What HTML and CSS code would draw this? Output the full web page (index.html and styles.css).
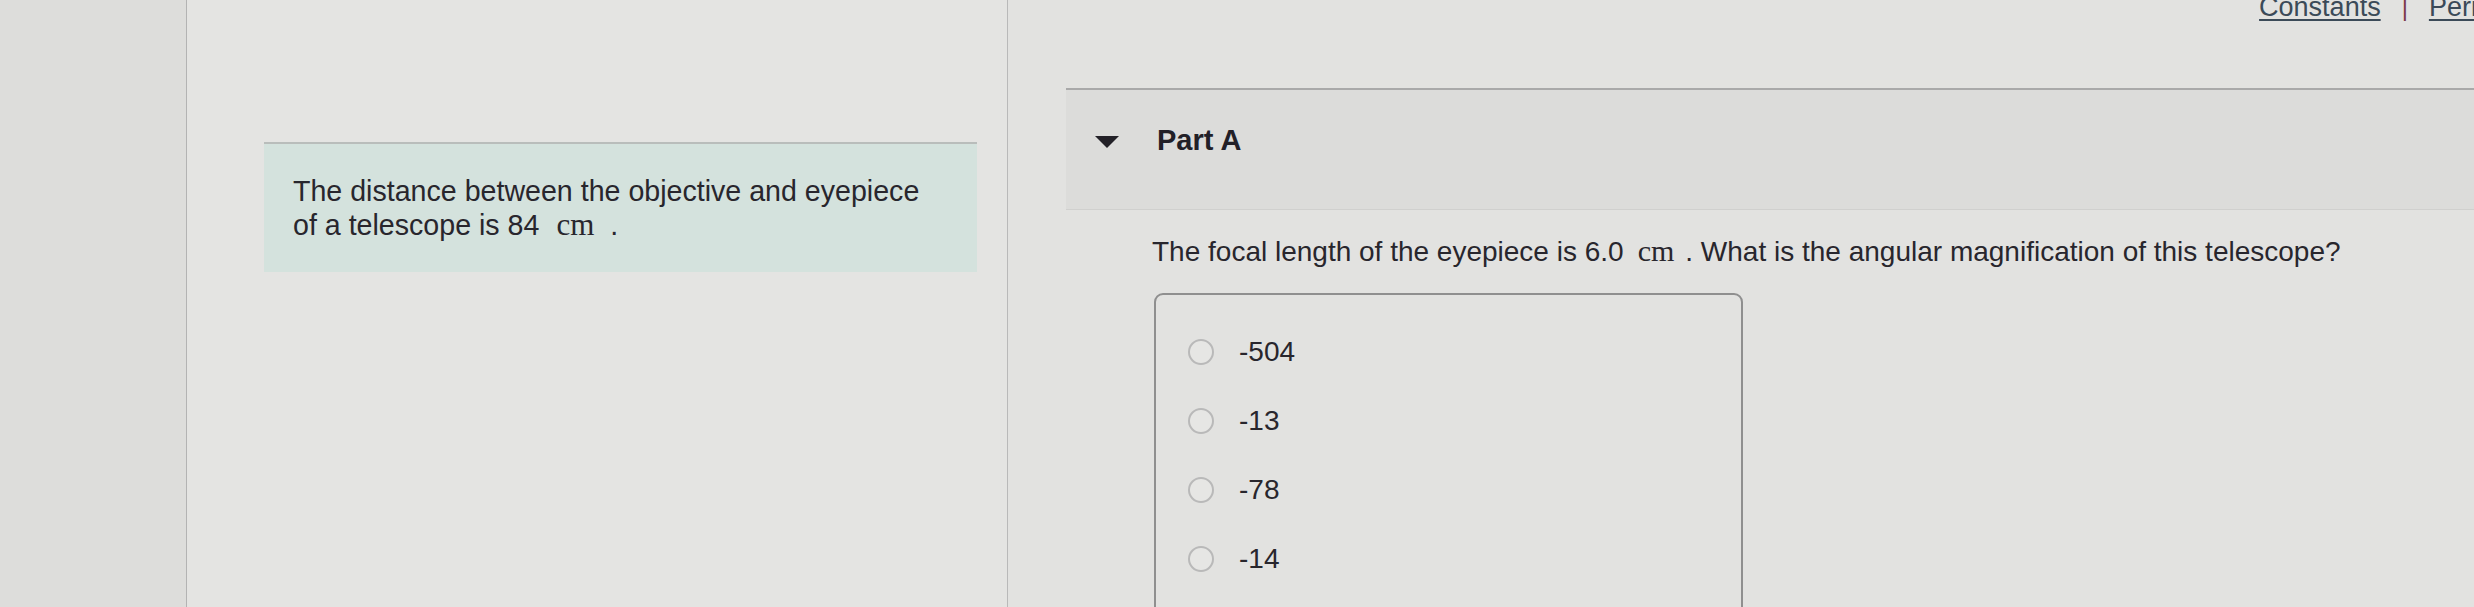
FILE: index.html
```html
<!DOCTYPE html>
<html lang="en">
<head>
<meta charset="utf-8">
<title>Telescope question</title>
<link rel="stylesheet" href="styles.css">
</head>
<body>
<div class="page">
  <aside class="strip"></aside>
  <section class="intro-col">
    <div class="intro">
      The distance between the objective and eyepiece of a telescope is 84<span class="math">cm</span>.
    </div>
  </section>
  <section class="main-col">
    <nav class="links">
      <a href="#" class="link">Constants</a>
      <span class="sep">|</span>
      <a href="#" class="link">Periodic Table</a>
    </nav>
    <div class="part-head">
      <span class="caret"></span>
      <span class="part-title">Part A</span>
    </div>
    <p class="question">The focal length of the eyepiece is 6.0<span class="math">cm</span>. What is the angular magnification of this telescope?</p>
    <div class="answers">
      <label class="opt"><span class="radio"></span><span class="opt-text">-504</span></label>
      <label class="opt"><span class="radio"></span><span class="opt-text">-13</span></label>
      <label class="opt"><span class="radio"></span><span class="opt-text">-78</span></label>
      <label class="opt"><span class="radio"></span><span class="opt-text">-14</span></label>
    </div>
  </section>
</div>
</body>
</html>
```
FILE: styles.css
```css
html, body {
  margin: 0;
  padding: 0;
  height: 607px;
  overflow: hidden;
}
body {
  background: #e2e2e0;
  font-family: "Liberation Sans", Arial, sans-serif;
  color: #28262d;
}
.page {
  display: flex;
  height: 607px;
}
.strip {
  width: 186px;
  flex: none;
  background: #dddddb;
  border-right: 1px solid #b3b3b3;
}
.intro-col {
  width: 821px;
  flex: none;
  background: #e4e4e2;
  border-right: 1px solid #b9b9b9;
  padding: 142px 30px 0 77px;
  box-sizing: border-box;
}
.intro {
  background: #d4e2dd;
  border-top: 2px solid #b9bdbb;
  padding: 31px 50px 30px 29px;
  font-size: 28.6px;
  line-height: 33px;
}
.intro .math {
  margin: 0 16px 0 17px;
  font-size: 31px;
}
.math {
  font-family: "Liberation Serif", "Times New Roman", serif;
  margin: 0 11px 0 14px;
  font-size: 30px;
}
.main-col {
  flex: 1;
  min-width: 0;
  background: #e2e2e0;
  overflow: hidden;
}
.links {
  display: flex;
  justify-content: flex-end;
  align-items: baseline;
  white-space: nowrap;
  font-size: 27px;
  line-height: 27px;
  height: 21px;
  margin-top: -6px;
  margin-right: -124px;
  gap: 21px;
}
.link {
  color: #3b4a58;
  text-decoration: underline;
  text-decoration-thickness: 2px;
  text-underline-offset: 3px;
}
.sep {
  color: #7b3b4b;
  font-size: 24px;
}
.part-head {
  margin: 73px 0 0 58px;
  height: 122px;
  background: #dcdcda;
  border-top: 2px solid #a9a9a9;
  border-bottom: 1px solid #d0d0ce;
  display: flex;
  align-items: center;
  padding-bottom: 18px;
  box-sizing: border-box;
}
.caret {
  width: 0;
  height: 0;
  border-left: 12px solid transparent;
  border-right: 12px solid transparent;
  border-top: 12px solid #232127;
  margin-left: 29px;
  margin-right: 38px;
  margin-top: 2px;
}
.part-title {
  font-weight: bold;
  font-size: 29px;
  color: #222027;
}
.question {
  margin: 24px 0 0 144px;
  font-size: 28px;
  line-height: 33px;
  white-space: nowrap;
}
.answers {
  margin: 25px 0 0 146px;
  width: 589px;
  height: 360px;
  box-sizing: border-box;
  border: 2px solid #8f8f8f;
  border-radius: 9px;
  padding-top: 22px;
  display: flex;
  flex-direction: column;
}
.opt {
  display: flex;
  align-items: center;
  height: 69px;
  padding-left: 32px;
  font-size: 28px;
}
.radio {
  width: 26px;
  height: 26px;
  box-sizing: border-box;
  border: 2px solid #b9b9b9;
  border-radius: 50%;
  background: #e6e6e4;
  margin-right: 25px;
  flex: none;
}
.opt-text {
  color: #28262d;
}
```
